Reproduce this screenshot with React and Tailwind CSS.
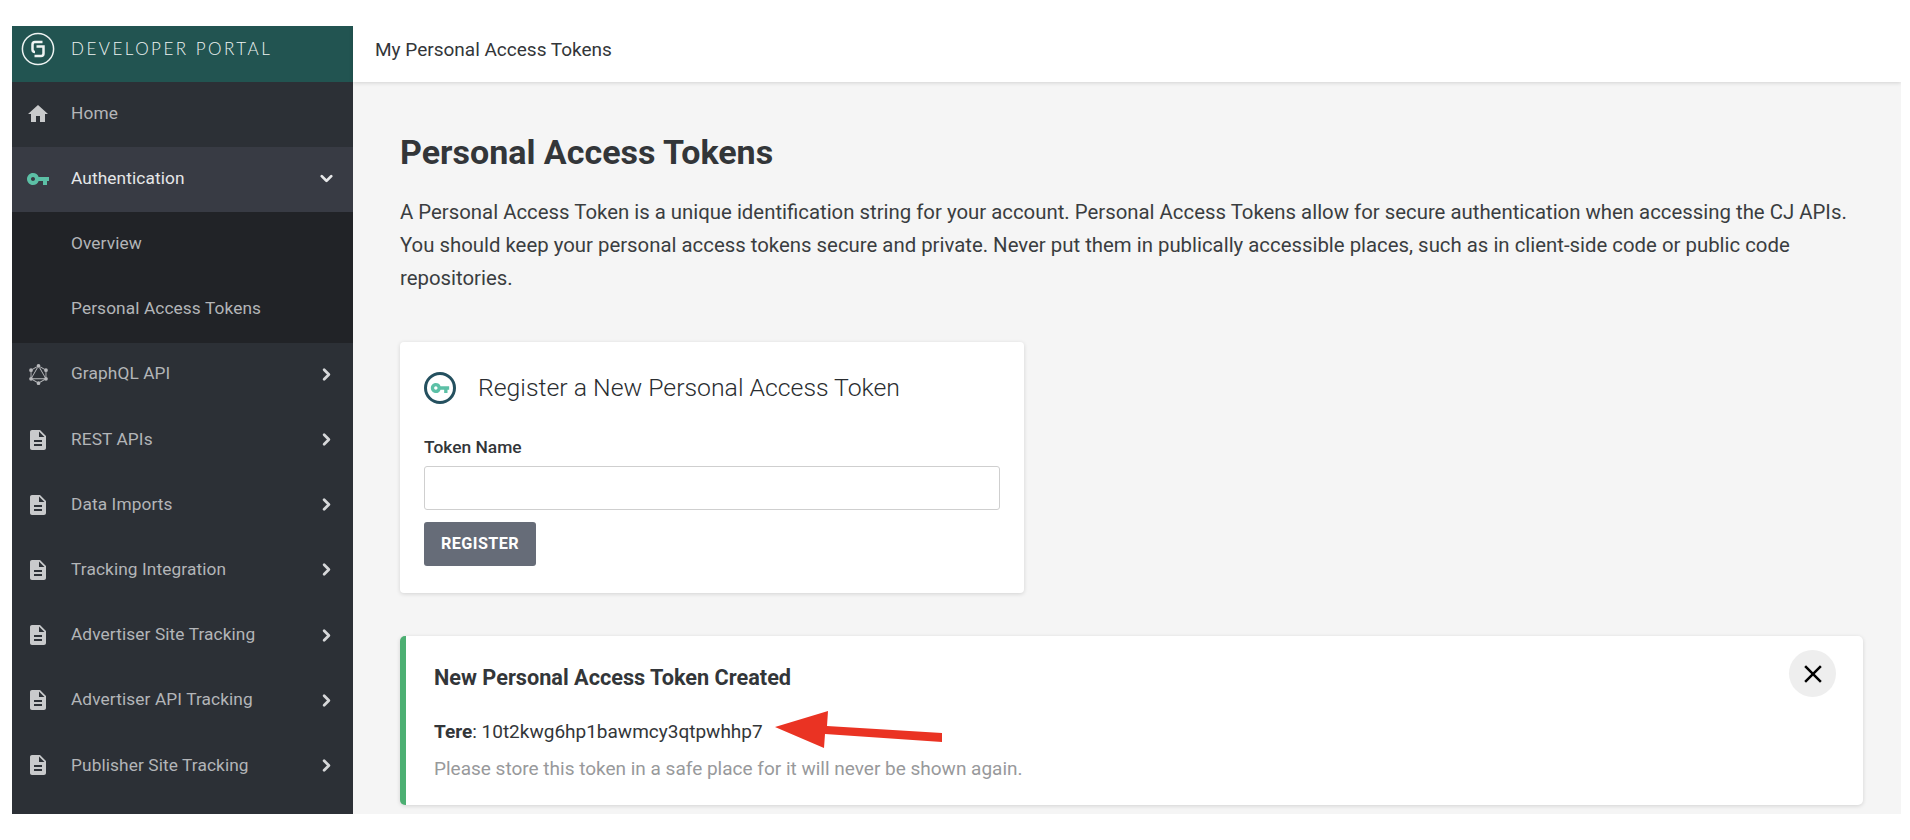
import React from "react";
import { MdHome, MdVpnKey, MdDescription, MdClose } from "react-icons/md";
import { SiGraphql } from "react-icons/si";
import { ChevronRight, ChevronDown } from "lucide-react";

function Row({ icon, label, bg = "", text = "text-[#b3b5b8]", chevron }) {
  return (
    <div className={`flex h-[65.2px] shrink-0 items-center pb-[2px] ${bg}`}>
      <div className="flex w-[59px] shrink-0 pl-[14px]">
        <div className="flex w-[24px] justify-center">{icon}</div>
      </div>
      <span className={`text-[17.3px] tracking-[0.1px] ${text}`}>{label}</span>
      {chevron === "right" && (
        <ChevronRight size={19} strokeWidth={3.5} className="ml-auto mr-[17px] text-[#d6d7d9]" />
      )}
      {chevron === "down" && (
        <ChevronDown size={19} strokeWidth={3.5} className="ml-auto mr-[17px] text-[#e8e9ea]" />
      )}
    </div>
  );
}

const doc = <MdDescription size={24} className="text-[#c9cacc]" />;

function Logo() {
  return (
    <svg width="34" height="34" viewBox="0 0 34 34" fill="none" stroke="#eef3f2">
      <circle cx="17" cy="17" r="15.6" strokeWidth="1.5" />
      <path d="M21.5 10H14Q11.5 10 11.5 12.5V17.5Q11.5 20 14 20" strokeWidth="2.5" />
      <path d="M15.5 14.5H22.5V21.5Q22.5 24 20 24H13.5" strokeWidth="2.5" />
    </svg>
  );
}

export default function App() {
  return (
    <div className="h-[840px] w-full overflow-hidden bg-white pb-[26px] pl-[12px] pr-[9px] pt-[26px] font-['Roboto',sans-serif]">
      <div className="flex h-full w-full overflow-hidden bg-[#f5f5f5]">
        <aside className="flex w-[341px] shrink-0 flex-col overflow-hidden bg-[#2c3036]">
          <div className="flex h-[56px] shrink-0 items-center bg-[#225451] pb-[10px] pl-[9px]">
            <Logo />
            <span className="ml-[16px] whitespace-nowrap font-['Lato',sans-serif] text-[17px] font-light tracking-[2.5px] text-[#eef3f2]">
              DEVELOPER PORTAL
            </span>
          </div>
          <Row icon={<MdHome size={24} className="text-[#c9cacc]" />} label="Home" />
          <Row
            icon={<MdVpnKey size={26} className="text-[#5cc0a6]" />}
            label="Authentication"
            bg="bg-[#383b44]"
            text="text-[#e6e7e8]"
            chevron="down"
          />
          <Row icon={null} label="Overview" bg="bg-[#212327]" />
          <Row icon={null} label="Personal Access Tokens" bg="bg-[#212327]" />
          <Row icon={<SiGraphql size={21} className="text-[#b9babd]" />} label="GraphQL API" chevron="right" />
          <Row icon={doc} label="REST APIs" chevron="right" />
          <Row icon={doc} label="Data Imports" chevron="right" />
          <Row icon={doc} label="Tracking Integration" chevron="right" />
          <Row icon={doc} label="Advertiser Site Tracking" chevron="right" />
          <Row icon={doc} label="Advertiser API Tracking" chevron="right" />
          <Row icon={doc} label="Publisher Site Tracking" chevron="right" />
        </aside>

        <div className="flex min-w-0 flex-1 flex-col">
          <header className="flex h-[56px] shrink-0 items-center bg-white pb-[7px] pl-[22px] text-[19px] text-[#333639] shadow-[0_1px_4px_rgba(0,0,0,0.14)]">
            My Personal Access Tokens
          </header>
          <main className="flex-1 pl-[47px] pr-[38px] pt-[48px]">
            <h1 className="text-[34px] font-bold leading-[44px] text-[#333639]">Personal Access Tokens</h1>
            <p className="mt-[22px] text-[20.36px] leading-[33px] text-[#3a3d40]">
              A Personal Access Token is a unique identification string for your account. Personal Access Tokens allow for secure authentication when accessing the CJ APIs. You should keep your personal access tokens secure and private. Never put them in publically accessible places, such as in client-side code or public code repositories.
            </p>

            <section className="mt-[47px] h-[251px] w-[624px] rounded-[4px] bg-white px-[24px] pt-[30px] shadow-[0_1px_4px_rgba(0,0,0,0.14)]">
              <div className="flex items-center">
                <div className="flex h-[32px] w-[32px] items-center justify-center rounded-full border-[3px] border-[#24505f]">
                  <MdVpnKey size={20} className="text-[#5cc0a6]" />
                </div>
                <h2 className="ml-[22px] text-[24.8px] font-light leading-[32px] text-[#2a2d30]">
                  Register a New Personal Access Token
                </h2>
              </div>
              <label className="mt-[32px] block text-[17.4px] font-medium leading-[22px] text-[#333639]">Token Name</label>
              <input className="mt-[8px] block h-[44px] w-full rounded-[3px] border border-[#cfcfcf] bg-white" />
              <button className="mt-[12px] flex h-[44px] w-[112px] items-center justify-center rounded-[3px] bg-[#666c78] text-[16.2px] font-bold tracking-[0.4px] text-white">
                REGISTER
              </button>
            </section>

            <section className="relative mt-[43px] h-[169px] rounded-[5px] border-l-[6px] border-[#4caf72] bg-white pl-[28px] pt-[28px] shadow-[0_1px_4px_rgba(0,0,0,0.14)]">
              <h3 className="text-[21.7px] font-bold leading-[28px] text-[#333639]">New Personal Access Token Created</h3>
              <p className="relative mt-[26px] w-fit text-[19px] leading-[28px] text-[#333639]">
                <strong className="font-bold">Tere</strong>: 10t2kwg6hp1bawmcy3qtpwhhp7
                <svg
                  className="absolute left-[341px] top-[-7px]"
                  width="170"
                  height="40"
                  viewBox="0 0 170 40"
                >
                  <path d="M0 16L53 0L52 15L167 22L167 31L50 23L49 37Z" fill="#ea3323" />
                </svg>
              </p>
              <p className="mt-[9px] text-[19px] leading-[28px] text-[#98999b]">
                Please store this token in a safe place for it will never be shown again.
              </p>
              <button className="absolute right-[27px] top-[14px] flex h-[47px] w-[47px] items-center justify-center rounded-full bg-[#eeeeee]">
                <MdClose size={30} className="text-black" />
              </button>
            </section>
          </main>
        </div>
      </div>
    </div>
  );
}
